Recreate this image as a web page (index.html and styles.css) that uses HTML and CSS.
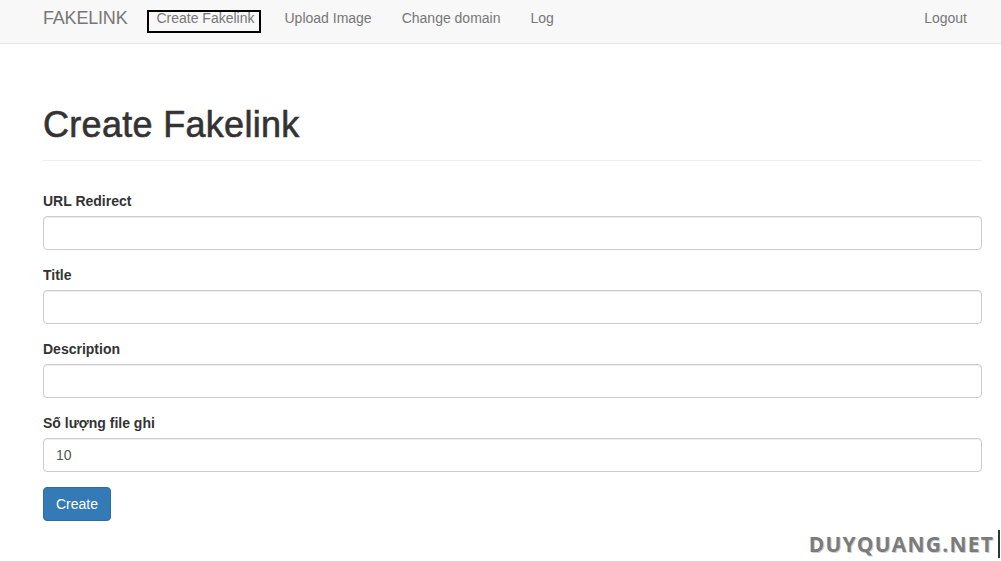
FILE: index.html
```html
<!DOCTYPE html>
<html lang="vi">
<head>
<meta charset="utf-8">
<title>Create Fakelink</title>
<link rel="stylesheet" href="styles.css">
</head>
<body>
<nav class="navbar">
  <div class="nav-inner">
    <a class="brand" href="#">FAKELINK</a>
    <ul class="nav">
      <li><a class="active" href="#">Create Fakelink<span class="mark"></span></a></li>
      <li><a href="#">Upload Image</a></li>
      <li><a href="#">Change domain</a></li>
      <li><a href="#">Log</a></li>
    </ul>
    <ul class="nav nav-right">
      <li><a href="#">Logout</a></li>
    </ul>
  </div>
</nav>
<main class="container">
  <h1 class="page-header">Create Fakelink</h1>
  <form class="form">
    <div class="form-group">
      <label>URL Redirect</label>
      <input class="form-control" type="text">
    </div>
    <div class="form-group">
      <label>Title</label>
      <input class="form-control" type="text">
    </div>
    <div class="form-group">
      <label>Description</label>
      <input class="form-control" type="text">
    </div>
    <div class="form-group">
      <label>Số lượng file ghi</label>
      <input class="form-control" type="text" value="10">
    </div>
    <button class="btn" type="button">Create</button>
  </form>
</main>
<div class="watermark">DUYQUANG.NET</div>
</body>
</html>
```
FILE: styles.css
```css
* { box-sizing: border-box; }
html, body { margin: 0; padding: 0; }
body {
  font-family: "Liberation Sans", Arial, sans-serif;
  font-size: 14px;
  line-height: 20px;
  color: #333;
  background: #fff;
  position: relative;
  height: 561px;
  overflow: hidden;
}
a { text-decoration: none; }
.navbar {
  height: 44px;
  background: #f8f8f8;
  border-bottom: 1px solid #e7e7e7;
}
.nav-inner {
  display: flex;
  align-items: flex-start;
  margin: 0 19px 0 43px;
}
.brand {
  font-size: 18px;
  line-height: 20px;
  color: #777;
  padding: 8px 14px 0 0;
  letter-spacing: -0.2px;
}
.nav {
  display: flex;
  list-style: none;
  margin: 0;
  padding: 0;
}
.nav a {
  display: block;
  position: relative;
  color: #777;
  padding: 8px 15px 0;
  line-height: 20px;
}
.nav-right { margin-left: auto; }
.nav-right a { padding-right: 15px; }
.mark {
  position: absolute;
  left: 6px;
  top: 10px;
  width: 114px;
  height: 23px;
  border: 2px solid #000;
}
.container {
  margin: 0 19px 0 43px;
}
.page-header {
  margin: 61px 0 30px;
  padding-bottom: 15px;
  font-size: 36px;
  line-height: 40px;
  font-weight: 500;
  letter-spacing: 0.3px;
  color: #333;
  -webkit-text-stroke: 0.6px #333;
  border-bottom: 1px solid #eee;
}
.form-group { margin-bottom: 15px; }
label {
  display: block;
  font-weight: bold;
  margin-bottom: 5px;
}
.form-control {
  display: block;
  width: 100%;
  height: 34px;
  padding: 6px 12px;
  font-family: inherit;
  font-size: 14px;
  color: #555;
  background: #fff;
  border: 1px solid #ccc;
  border-radius: 4px;
  box-shadow: inset 0 1px 1px rgba(0,0,0,.075);
}
.btn {
  display: inline-block;
  height: 34px;
  padding: 6px 12px;
  font-family: inherit;
  font-size: 14px;
  line-height: 20px;
  color: #fff;
  background: #337ab7;
  border: 1px solid #2e6da4;
  border-radius: 4px;
}
.watermark {
  position: absolute;
  right: 1px;
  bottom: 3px;
  padding-right: 4px;
  border-right: 2px solid #333;
  font-family: "Open Sans", sans-serif;
  font-weight: 700;
  font-size: 21px;
  letter-spacing: 1.2px;
  line-height: 28px;
  color: #7b7b7b;
  text-shadow: 1px 1px 0 #d0d0d0;
}
```
